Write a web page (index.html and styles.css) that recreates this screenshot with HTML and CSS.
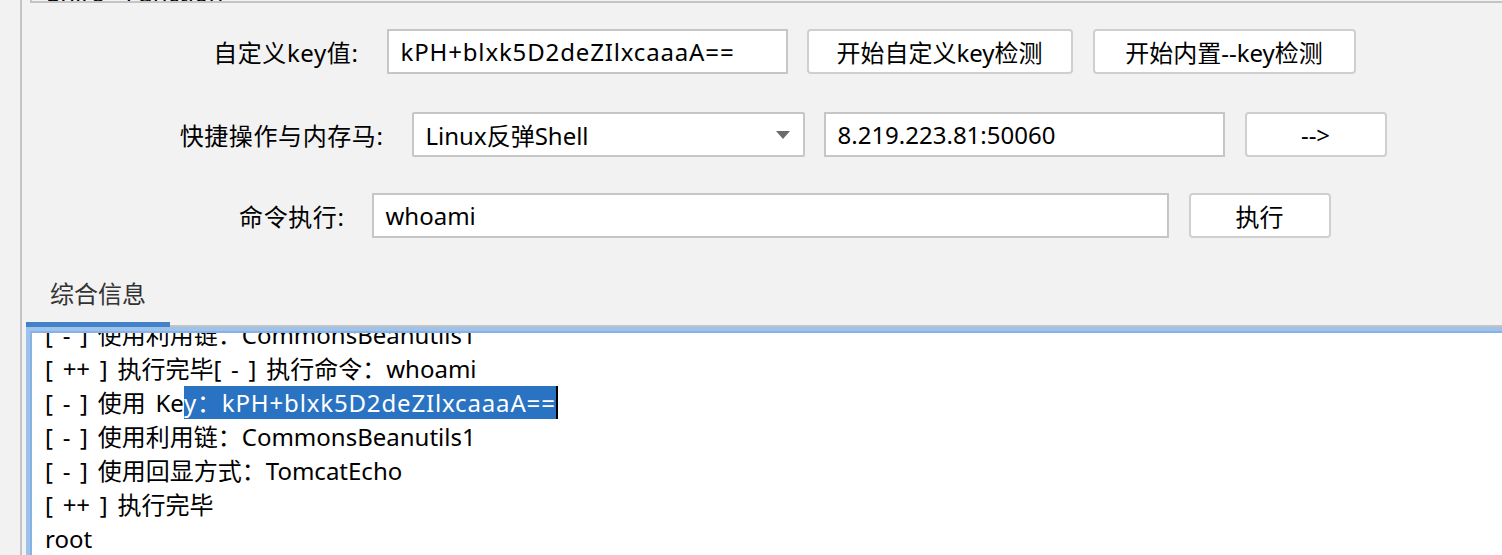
FILE: index.html
```html
<!DOCTYPE html>
<html lang="zh-CN">
<head>
<meta charset="utf-8">
<title>Shiro</title>
<link rel="stylesheet" href="styles.css">
</head>
<body>
<div class="window">
  <div class="gutter"></div>
  <div class="main">
    <div class="prevbox"><div class="prevtitle">Shiro Function</div></div>
    <div class="form">
      <div class="row">
        <div class="lbl lbl-key">自定义key值:</div>
        <div class="field w-key"><span class="keytxt">kPH+blxk5D2deZIlxcaaaA==</span></div>
        <div class="btn w-b1 gap19">开始自定义key检测</div>
        <div class="btn w-b2 gap20">开始内置--key检测</div>
      </div>
      <div class="row row2">
        <div class="lbl lbl-quick">快捷操作与内存马:</div>
        <div class="field select w-sel">
          <span>Linux反弹Shell</span>
          <svg class="arrow" width="14" height="8" viewBox="0 0 14 8"><polygon points="0,0 14,0 7,8" fill="#6b6b6b"/></svg>
        </div>
        <div class="field w-addr gap19">8.219.223.81:50060</div>
        <div class="btn w-small gap20">--&gt;</div>
      </div>
      <div class="row row3">
        <div class="lbl lbl-cmd">命令执行:</div>
        <div class="field w-cmd">whoami</div>
        <div class="btn w-small gap20">执行</div>
      </div>
    </div>
    <div class="tabpane">
      <div class="tabbar"><div class="tab">综合信息</div></div>
      <div class="console">
        <div class="console-inner">
          <div class="log">
            <div class="line">[ - ] 使用利用链：CommonsBeanutils1</div>
            <div class="line">[ ++ ] 执行完毕[ - ] 执行命令：whoami</div>
            <div class="line">[ - ] 使用 Ke<span class="sel keytxt">y：kPH+blxk5D2deZIlxcaaaA==</span></div>
            <div class="line">[ - ] 使用利用链：CommonsBeanutils1</div>
            <div class="line">[ - ] 使用回显方式：TomcatEcho</div>
            <div class="line">[ ++ ] 执行完毕</div>
            <div class="line">root</div>
          </div>
        </div>
      </div>
    </div>
  </div>
</div>
</body>
</html>
```
FILE: styles.css
```css
html, body {
  margin: 0;
  padding: 0;
}
body {
  width: 1502px;
  height: 555px;
  overflow: hidden;
  background: #f2f2f2;
  font-family: "Noto Sans", "Noto Sans CJK SC", sans-serif;
  font-size: 24px;
  color: #000;
}
.window {
  display: flex;
  height: 555px;
}
.gutter {
  flex: none;
  width: 20px;
  border-right: 2px solid #c4c4c4;
}
.main {
  flex: 1;
  min-width: 0;
  display: flex;
  flex-direction: column;
}
.prevbox {
  margin-left: 8px;
  height: 1px;
  overflow: hidden;
  border-left: 2px solid #c4c4c4;
  border-bottom: 2px solid #c4c4c4;
}
.prevtitle {
  margin-top: -21px;
  padding-left: 15px;
  line-height: 28px;
  word-spacing: 14px;
  white-space: nowrap;
}
.form {
  padding-left: 44px;
  margin-top: 26px;
}
.row {
  display: flex;
  justify-content: center;
  height: 45px;
}
.row2 { margin-top: 38px; }
.row3 { margin-top: 36px; }
.lbl {
  box-sizing: border-box;
  display: flex;
  align-items: center;
  justify-content: flex-end;
  padding-right: 28px;
  white-space: nowrap;
  letter-spacing: 0.6px;
  flex: none;
}
.lbl-key { width: 174px; }
.lbl-quick { width: 230px; }
.lbl-cmd { width: 134px; padding-right: 27px; }
.field {
  box-sizing: border-box;
  flex: none;
  display: flex;
  align-items: center;
  padding-left: 12px;
  background: #fff;
  border: 2px solid #c6c6c6;
  white-space: nowrap;
}
.keytxt {
  letter-spacing: 0.85px;
}
.select {
  justify-content: space-between;
  padding-right: 13px;
  border-radius: 2px;
}
.arrow { display: block; }
.btn {
  box-sizing: border-box;
  flex: none;
  display: flex;
  align-items: center;
  justify-content: center;
  background: #fff;
  border: 2px solid #cfcfcf;
  border-radius: 4px;
  white-space: nowrap;
}
.gap19 { margin-left: 19px; }
.gap20 { margin-left: 20px; }
.w-key { width: 401px; }
.w-b1 { width: 266px; }
.w-b2 { width: 263px; }
.w-sel { width: 393px; }
.w-addr { width: 401px; }
.w-small { width: 142px; }
.w-cmd { width: 797px; }

.tabpane {
  flex: 1;
  min-height: 0;
  margin-left: 4px;
  margin-top: 32px;
  display: flex;
  flex-direction: column;
}
.tabbar {
  flex: none;
  display: flex;
  border-bottom: 2px solid #c4c4c4;
}
.tab {
  box-sizing: border-box;
  width: 144px;
  height: 57px;
  margin-bottom: -2px;
  padding: 10px 0 0 24px;
  line-height: 28px;
  color: #333;
  border-bottom: 5px solid #4382c9;
}
.console {
  flex: 1;
  min-height: 0;
  display: flex;
  background: #fff;
  border-top: 4px solid #9dc3ec;
  border-left: 4px solid #9dc3ec;
}
.console-inner {
  flex: 1;
  min-width: 0;
  overflow: hidden;
  border-top: 2px solid #87b2e2;
  border-left: 2px solid #87b2e2;
  padding-left: 13px;
}
.log {
  margin-top: -15px;
  line-height: 34px;
  word-spacing: 3.5px;
}
.line {
  white-space: nowrap;
}
.sel {
  background: #2a73c2;
  color: #fff;
  border-right: 2px solid #000;
}
```
